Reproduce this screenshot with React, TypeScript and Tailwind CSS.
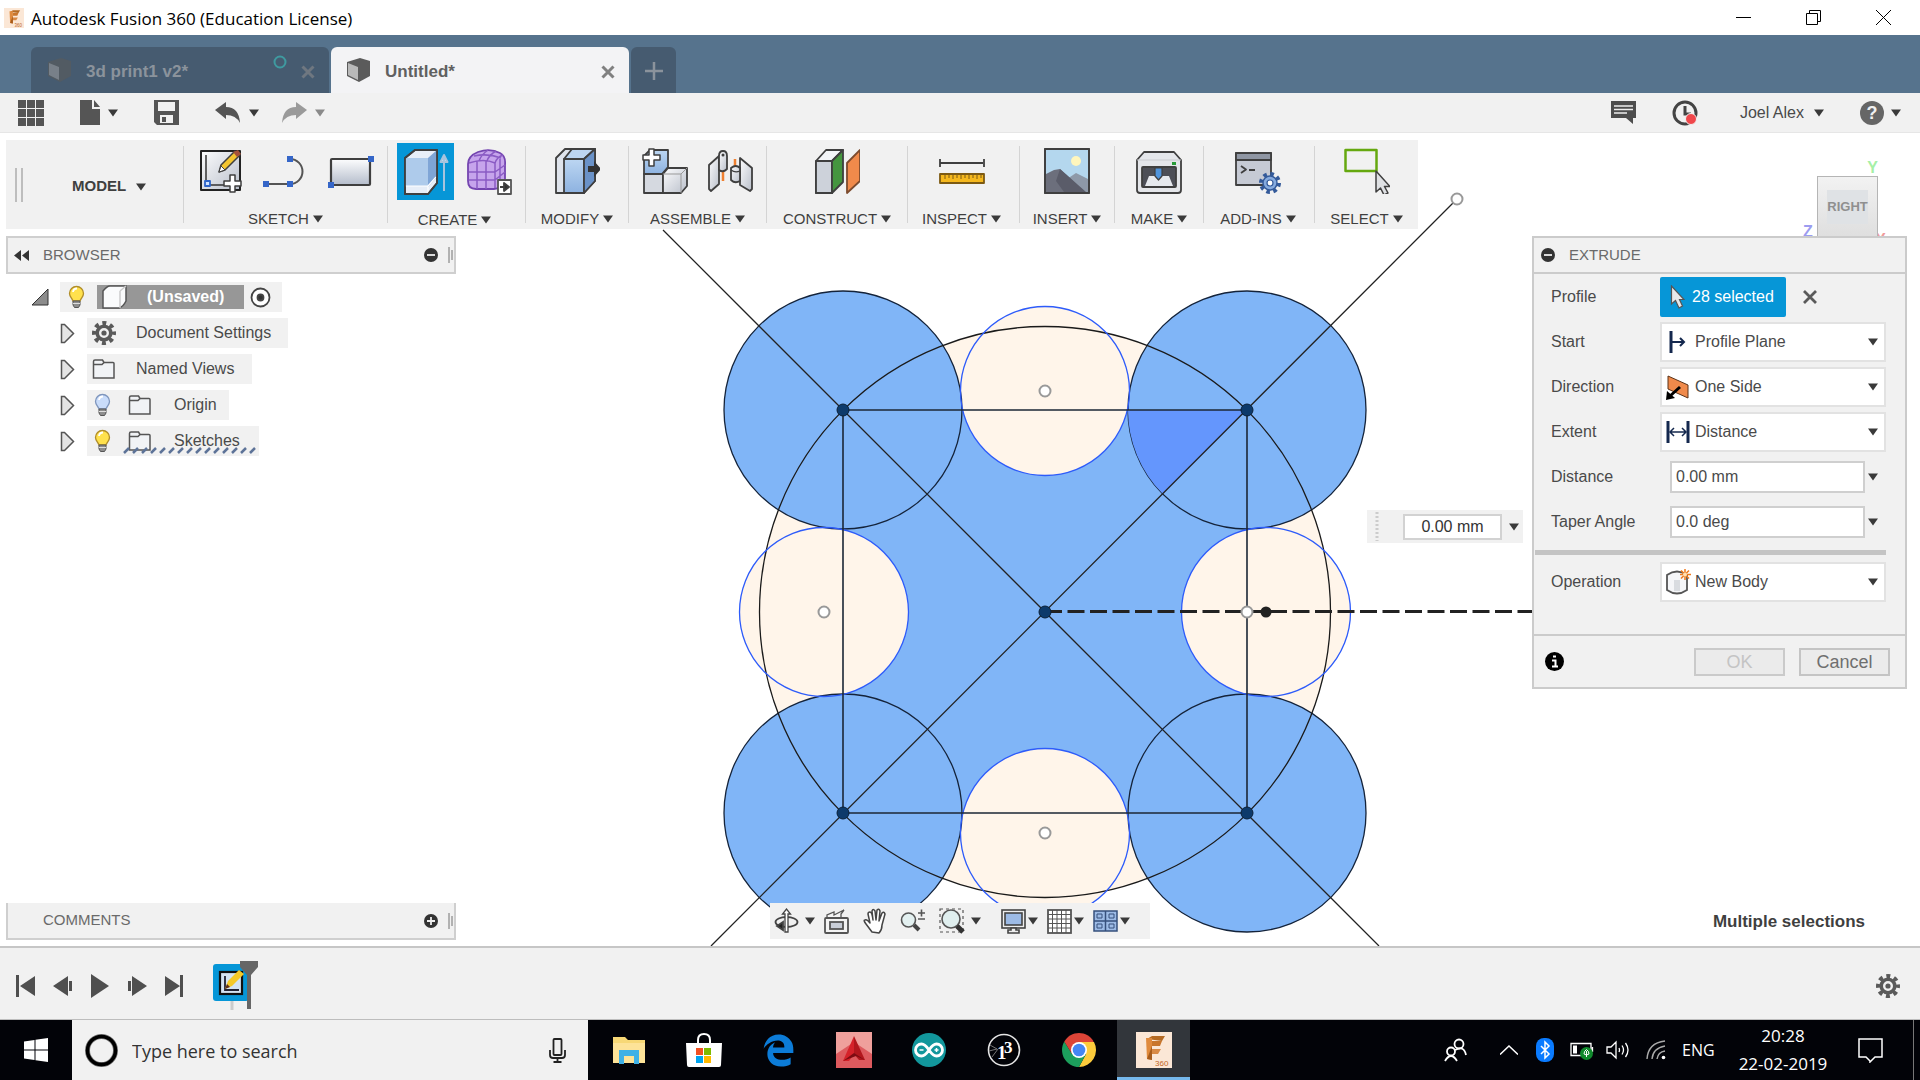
import type { ReactNode } from "react"
import { FaEdgeLegacy } from "react-icons/fa6"

type IconProps = { className?: string }

const INK = "#3f3f3f"

function Caret({ className = "text-[#3a3a3a]" }: IconProps) {
  return (
    <svg width="10" height="8" viewBox="0 0 10 8" className={`shrink-0 ${className}`}>
      <path d="M0 0.5h10L5 7.5z" fill="currentColor" />
    </svg>
  )
}

/* ---------- shared small icons ---------- */

function Gear() {
  return (
    <svg width="24" height="24" viewBox="0 0 24 24" fill="none" stroke="#5a5a5a">
      <circle cx="12" cy="12" r="10" strokeWidth="4" strokeDasharray="4 3.854" strokeDashoffset="2" />
      <circle cx="12" cy="12" r="6.8" strokeWidth="3.6" />
      <circle cx="12" cy="12" r="2.6" fill="#5a5a5a" stroke="none" />
    </svg>
  )
}

function Bulb({ on = true }: { on?: boolean }) {
  return (
    <svg width="17" height="24" viewBox="0 0 17 24">
      <path
        d="M8.500 1.500a7 7 0 0 0-7 7c0 3 2.500 4.500 3.500 7.500h7c1-3 3.500-4.500 3.500-7.500a7 7 0 0 0-7-7z"
        fill={on ? "#ffe14d" : "#c9dcfa"}
        stroke={on ? "#b08d2a" : "#7f96bd"}
        strokeWidth="1.300"
      />
      <path d="M5 7a4 4 0 0 1 4-3.500" stroke="#fff" strokeWidth="1.800" fill="none" />
      <path d="M5 16h7v4l-1.500 2.500h-4L5 20z" fill="#8e8e8e" stroke="#555" />
      <path d="M5 18.500h7" stroke="#ddd" />
    </svg>
  )
}

function Folder() {
  return (
    <svg width="24" height="22" viewBox="0 0 24 22" fill="#f1f3f6" stroke="#555" strokeWidth="1.500">
      <path d="M1.500 20V3.500q0-1.500 1.500-1.500h7.500l1.500 2.500h9q1 0 1 1V20z" />
      <path d="M1.500 6.500h8.500l2-2" fill="none" />
    </svg>
  )
}

function RoundSign({ plus = false }: { plus?: boolean }) {
  return (
    <svg width="14" height="14" viewBox="0 0 14 14">
      <circle cx="7" cy="7" r="7" fill="#333" />
      <path d={plus ? "M3 7h8M7 3v8" : "M3 7h8"} stroke="#eee" strokeWidth="1.800" />
    </svg>
  )
}

function DragBars() {
  return (
    <svg width="5" height="18" viewBox="0 0 5 18" stroke="#888" strokeWidth="1.200">
      <path d="M1 1v16M4 4v10" />
    </svg>
  )
}

function Cross({ className = "text-[#808080]" }: IconProps) {
  return (
    <svg width="14" height="14" viewBox="0 0 14 14" className={className}>
      <path d="M1.500 1.500l11 11M12.500 1.500l-11 11" stroke="currentColor" strokeWidth="3" />
    </svg>
  )
}

function TabCube({ dim = false }: { dim?: boolean }) {
  return (
    <svg width="25" height="24" viewBox="0 0 25 24" opacity={dim ? 0.6 : 1} className="-mt-1">
      <path d="M1 4L14 0l10 3v15l-11 6-12-6z" fill="#5b5b5b" />
      <path d="M2 5l10 4v13L2 17z" fill={dim ? "#9a9a9a" : "#b9b9b9"} />
    </svg>
  )
}

function FusionMark({ size }: { size: number }) {
  return (
    <svg width={size} height={size} viewBox="0 0 36 36">
      <rect width="36" height="36" fill="#fbe7d6" />
      <path d="M11 7l5-3h13l-3 5z" fill="#b56a22" />
      <path d="M10 6h6v22l-5-1z" fill="#e08a3c" />
      <path d="M16 9h10l-2 5h-8z" fill="#c9762c" />
      <path d="M16 17h9l-3 5h-6z" fill="#d98a45" />
      <path d="M16 14v14l-5-1z" fill="#a75c1c" />
      <text x="19" y="34" fontSize="8" fill="#c0661f" fontFamily="Liberation Sans">360</text>
    </svg>
  )
}

/* ---------- ribbon icons ---------- */

function Big({ children }: { children: ReactNode }) {
  return (
    <svg width="46" height="46" viewBox="0 0 46 46" fill="none" stroke={INK} strokeWidth="1.800" strokeLinejoin="round">
      <defs>
        <linearGradient id="steel" x1="0" y1="0" x2="1" y2="1">
          <stop offset="0" stopColor="#fdfdfe" />
          <stop offset="1" stopColor="#b9bfca" />
        </linearGradient>
        <linearGradient id="sheet" x1="0" y1="0" x2="0" y2="1">
          <stop offset="0" stopColor="#fdfdfe" />
          <stop offset="1" stopColor="#b4bccb" />
        </linearGradient>
        <linearGradient id="sky" x1="0" y1="0" x2="0" y2="1">
          <stop offset="0" stopColor="#bcd6f2" />
          <stop offset="1" stopColor="#8db2e0" />
        </linearGradient>
      </defs>
      {children}
    </svg>
  )
}

const SketchIcon = () => (
  <Big>
    <rect x="3" y="3" width="39" height="39" fill="url(#steel)" stroke="#222" strokeWidth="2" />
    <path d="M8 7v30h24" stroke="#333" strokeWidth="1.500" />
    <rect x="7" y="33" width="5" height="5" fill="#cfe2ff" stroke="#2d64c8" />
    <path d="M21 24l2-7L37 3l5 4-15 15z" fill="#f3c530" strokeWidth="1.500" />
    <path d="M35 4l5-2 3 4-4 3z" fill="#a4523a" stroke="none" />
    <path d="M21 24l2-6 4 4z" fill="#fff" strokeWidth="1" />
    <path d="M32 27h5v6h6v5h-6v6h-5v-6h-6v-5h6z" fill="#fff" strokeWidth="1.500" />
  </Big>
)

const LineIcon = () => (
  <Big>
    <path d="M3 36h24a12.500 12.500 0 0 0 0-25" stroke="#555" strokeWidth="2" />
    <path d="M0 33h6v6H0zM24 33h6v6h-6zM24 8h6v6h-6z" fill="#3566c8" stroke="none" />
  </Big>
)

const RectIcon = () => (
  <Big>
    <rect x="3" y="11" width="39" height="26" rx="1" fill="url(#sheet)" strokeWidth="2.200" />
    <path d="M0 34h6v6H0zM40 8h6v6h-6z" fill="#3566c8" stroke="none" />
  </Big>
)

const ExtrudeIcon = () => (
  <Big>
    <path d="M2 9L12 1h22v33l-9 11H2z" fill="#e7eef8" />
    <path d="M2 9h23v28H2z" fill="#aecbeb" stroke="none" />
    <path d="M25 9l9-8v27l-9 10z" fill="#7fa5d6" stroke="none" />
    <path d="M2 37h23l8-9M25 37v7" stroke="#fff" strokeWidth="1.200" />
    <path d="M2 9L12 1h22v33l-9 11H2z" />
    <path d="M41 42V8M37.500 13L41 6l3.500 7z" stroke="#a7c3dd" fill="#d5e4f2" strokeWidth="2" />
  </Big>
)

const FormIcon = () => (
  <Big>
    <path d="M2 15Q2 7 12 3 24-1 34 4q6 3 5 12v14q-4 10-11 10H10q-8 0-8-8z" fill="#c6a4ec" stroke="#7445b0" />
    <path
      d="M3 14q15-5 26 0v25M3 23h26l10-7M3 31h26l10-8M11 12v28M20 12v28M8 7q14-3 27 2M13 12q2-6 9-11M21 12q2-6 9-10M29 14q2-6 8-8M34 10v25"
      stroke="#8a5bc4"
      strokeWidth="1.500"
    />
    <rect x="32" y="31" width="13" height="14" fill="#fff" stroke="#555" />
    <path d="M34 38h5M38 34l5 4-5 4z" fill="#333" />
  </Big>
)

const ModifyIcon = () => (
  <Big>
    <path d="M2 10L11 1h30v32L30 45H2z" fill="#dfe4ec" />
    <path d="M10 11l8-10h23l-11 10z" fill="#bcd5f1" />
    <path d="M10 11h20v34H10z" fill="url(#sky)" />
    <path d="M30 11L41 1v32L30 45z" fill="#6a92c8" />
    <path d="M34 18h6v-5l7 8-7 8v-5h-6z" fill="#333" stroke="none" />
  </Big>
)

const AssembleIcon = () => (
  <Big>
    <path d="M2 8l6-6h18v17l-6 7H2z" fill="url(#sky)" />
    <path d="M2 26h19v19H2z" fill="#d5d9e0" />
    <path d="M21 26l5-6h19v18l-6 7H21z" fill="url(#steel)" />
    <path d="M21 26h18v19M39 26l6-6" strokeWidth="1" stroke="#999" />
    <path d="M7 1h5v6h6v5h-6v6H7v-6H1V7h6z" fill="#fff" strokeWidth="1.500" />
  </Big>
)

const JointIcon = () => (
  <Big>
    <path d="M16 20v13M28 11v12" stroke="#f08030" strokeWidth="2.500" />
    <path d="M2 17L12 8v28L4 43l-2-2z" fill="url(#steel)" />
    <path d="M12 8q0-5 4-5t4 5v13q-4 4-8 1z" fill="url(#steel)" />
    <path d="M45 20L33 10v27l10 6 2-2z" fill="url(#steel)" />
    <path d="M33 20q-4-4-9 0v12q4 4 9 1z" fill="url(#steel)" />
    <path d="M24 22q4 3 9 1" strokeWidth="1.200" />
    <circle cx="16" cy="7" r="1.500" fill={INK} stroke="none" />
  </Big>
)

const ConstructIcon = () => (
  <Big>
    <path d="M2 13L12 2h17L18 13v32H2z" fill="#f3f5f8" />
    <path d="M2 13h16v32H2z" fill="#cdd2da" />
    <path d="M18 13L29 2v32L18 45z" fill="#45963f" />
    <path d="M33 15L46 2v31L33 45z" fill="#f08a4b" stroke="#7c4b2e" />
  </Big>
)

const InspectIcon = () => (
  <Big>
    <path d="M1 15h43M1 11v8M45 11v8" />
    <rect x="1" y="26" width="44" height="9" fill="#f5b81e" stroke="#7d5a12" />
    <path d="M6 27v4M10 27v3M14 27v4M18 27v3M22 27v4M26 27v3M30 27v4M34 27v3M38 27v4M42 27v3" stroke="#7d5a12" strokeWidth="1" />
  </Big>
)

const InsertIcon = () => (
  <Big>
    <rect x="1" y="1" width="44" height="44" fill="#b4d7ee" />
    <circle cx="32" cy="13" r="5" fill="#fff6bd" stroke="none" />
    <path d="M20 33l12-8 12 6v13H20z" fill="#8e99a8" stroke="none" />
    <path d="M2 26l8-4 6-1 10 9 15 14H2z" fill="#6c6f7c" stroke="none" />
    <path d="M16 21l-4 12 8 11h22z" fill="#5a5c69" stroke="none" />
    <rect x="1" y="1" width="44" height="44" />
  </Big>
)

const MakeIcon = () => (
  <Big>
    <path d="M1 12l7-8h30l7 8v30q0 3-3 3H4q-3 0-3-3z" fill="#e4e6ea" />
    <path d="M1 12h44" stroke="#c8cace" strokeWidth="1" />
    <rect x="6" y="19" width="34" height="20" rx="1" fill="#4d4f57" />
    <path d="M13 28h20l4 10H9z" fill="#e6e9ee" stroke="none" />
    <path d="M19 20h7v8l-3.500 4L19 28z" fill="#4f94dc" strokeWidth="1.200" />
    <rect x="36" y="14" width="4" height="3" fill="#289b38" stroke="none" />
  </Big>
)

const AddInsIcon = () => (
  <Big>
    <rect x="1" y="5" width="35" height="32" fill="#c6cad4" />
    <rect x="1" y="5" width="35" height="7" fill="#8f96a3" />
    <path d="M6 18l5 3.500L6 25M14 22h6" />
    <circle cx="35" cy="35" r="9" stroke="#345a9a" strokeWidth="4" strokeDasharray="3.600 3.469" />
    <circle cx="35" cy="35" r="7" fill="#86abdf" stroke="#345a9a" strokeWidth="1.500" />
    <circle cx="35" cy="35" r="3" fill="#fff" stroke="#345a9a" strokeWidth="1.200" />
  </Big>
)

const SelectIcon = () => (
  <Big>
    <rect x="1.500" y="2" width="31" height="21" stroke="#65a80f" strokeWidth="2.500" />
    <path d="M32 23v21l4.500-4 3.500 7 4-2-3.500-6.500H46z" fill="#dfe1e4" strokeWidth="1.500" />
  </Big>
)

type Group = { name: string; width: string; icons: (() => ReactNode)[]; gap?: string }

const groups: Group[] = [
  { name: "SKETCH", width: "w-[204px]", icons: [SketchIcon, LineIcon, RectIcon], gap: "gap-[19px]" },
  { name: "CREATE", width: "w-[138px] pr-1", icons: [ExtrudeIcon, FormIcon], gap: "gap-3" },
  { name: "MODIFY", width: "w-[103px]", icons: [ModifyIcon] },
  { name: "ASSEMBLE", width: "w-[138px]", icons: [AssembleIcon, JointIcon], gap: "gap-[19px]" },
  { name: "CONSTRUCT", width: "w-[141px]", icons: [ConstructIcon] },
  { name: "INSPECT", width: "w-[112px] pr-1", icons: [InspectIcon] },
  { name: "INSERT", width: "w-[95px]", icons: [InsertIcon] },
  { name: "MAKE", width: "w-[89px]", icons: [MakeIcon] },
  { name: "ADD-INS", width: "w-[111px] pr-0.5", icons: [AddInsIcon] },
  { name: "SELECT", width: "w-[104px]", icons: [SelectIcon] },
]

function TitleBar() {
  return (
    <header className="flex h-[35px] items-center bg-white pl-1 pr-7 text-black">
      <FusionMark size={20} />
      <h1 className="ml-[7px] pt-0.5 font-['Open_Sans',sans-serif] text-[17px] leading-6">Autodesk Fusion 360 (Education License)</h1>
      <div className="ml-auto flex items-center gap-[53px]">
        <button aria-label="Minimize">
          <svg width="17" height="17" stroke="#000"><path d="M1 8.500h15" /></svg>
        </button>
        <button aria-label="Restore">
          <svg width="17" height="17" fill="none" stroke="#000"><path d="M1.500 4.500h11v11h-11zM4.500 4.500v-3h11v11h-3" /></svg>
        </button>
        <button aria-label="Close">
          <svg width="17" height="17" stroke="#000"><path d="M1 1l15 15M16 1L1 16" /></svg>
        </button>
      </div>
    </header>
  )
}

function TabStrip() {
  return (
    <nav className="flex h-[58px] items-end gap-0.5 bg-[#56738d] pl-[31px] text-[17px] font-bold">
      <div className="flex h-[46px] w-[298px] items-center rounded-t-md bg-[#465b70] pl-4 pr-3.5 pt-1 text-[#8b939c]">
        <TabCube dim />
        <button className="ml-3.5">3d print1 v2*</button>
        <svg width="14" height="34" className="ml-auto">
          <circle cx="7" cy="7" r="5.500" fill="none" stroke="#3f9aa0" strokeWidth="2" />
        </svg>
        <button aria-label="Close 3d print1 v2*" className="ml-3.5">
          <Cross className="text-[#6f7780]" />
        </button>
      </div>
      <div className="flex h-[46px] w-[298px] items-center rounded-t-md bg-[#f3f3f5] pl-[15px] pr-3.5 pt-1 text-[#606060]">
        <TabCube />
        <button className="ml-3.5">Untitled*</button>
        <button aria-label="Close Untitled*" className="ml-auto">
          <Cross />
        </button>
      </div>
      <button aria-label="New tab" className="flex h-[46px] w-[45px] items-center justify-center rounded-t-md bg-[#465b70] pt-0.5">
        <svg width="18" height="18" stroke="#8b939c" strokeWidth="2.500"><path d="M9 0v18M0 9h18" /></svg>
      </button>
    </nav>
  )
}

function QuickBar() {
  return (
    <div className="flex h-10 items-center border-b border-[#e6e6e6] bg-[#f1f1f1] pl-[18px] pr-[19px] text-[#4a4a4a]">
      <button aria-label="Data panel">
        <svg width="26" height="26" fill="#555">
          <path d="M0 0h8v8H0zM9 0h8v8H9zM18 0h8v8h-8zM0 9h8v8H0zM9 9h8v8H9zM18 9h8v8h-8zM0 18h8v8H0zM9 18h8v8H9zM18 18h8v8h-8z" />
        </svg>
      </button>
      <button aria-label="File" className="ml-9 flex items-center gap-2">
        <svg width="20" height="25" fill="#555"><path d="M0 0h12v9h8v16H0zM14 0l6 7h-6z" /></svg>
        <Caret />
      </button>
      <button aria-label="Save" className="ml-9">
        <svg width="25" height="25" fillRule="evenodd" fill="#555">
          <path d="M0 0h25v25H3l-3-3zM4 2v9h17V2zM6 15v8h13v-8z" />
          <path d="M8 17h4v5H8z" />
        </svg>
      </button>
      <button aria-label="Undo" className="ml-9 flex items-center gap-2">
        <svg width="26" height="22" fill="#555"><path d="M0 8l11-8v5q13 0 14 16-4-8-14-8v4z" /></svg>
        <Caret />
      </button>
      <button aria-label="Redo" className="ml-[22px] flex items-center gap-2">
        <svg width="26" height="22" fill="#9a9a9a"><path d="M26 8L15 0v5Q2 5 1 21q4-8 14-8v4z" /></svg>
        <Caret className="text-[#8a8a8a]" />
      </button>
      <div className="ml-auto flex items-center">
        <button aria-label="Comments">
          <svg width="25" height="23" fill="#4d4d4d">
            <path d="M0 0h25v17h-3v6l-7-6H0z" />
            <path d="M3 5h19M3 8.500h19M3 12h13" stroke="#eee" strokeWidth="1.500" />
          </svg>
        </button>
        <button aria-label="Job status" className="ml-9">
          <svg width="26" height="26" fill="none" stroke="#444" strokeWidth="3">
            <circle cx="13" cy="13" r="11" />
            <path d="M13 6v8h6" />
            <circle cx="19" cy="19" r="5.500" fill="#f0474b" stroke="#f1f1f1" strokeWidth="1" />
          </svg>
        </button>
        <button className="ml-[42px] flex items-center gap-2.5 text-base">
          Joel Alex <Caret />
        </button>
        <button aria-label="Help" className="ml-9 flex items-center gap-[7px]">
          <svg width="24" height="24">
            <circle cx="12" cy="12" r="12" fill="#666" />
            <text x="12" y="18" textAnchor="middle" fontSize="18" fontWeight="700" fill="#f1f1f1">?</text>
          </svg>
          <Caret />
        </button>
      </div>
    </div>
  )
}

function Divider() {
  return <div className="h-[77px] w-px shrink-0 bg-[#d4d4d4]" />
}

function Ribbon() {
  return (
    <div className="relative ml-1.5 mt-[7px] flex h-[89px] w-fit items-center bg-[#f1f1f1] text-[15px] text-[#3f3f3f]">
      <div className="flex w-[177px] items-center pl-[9px]">
        <svg width="8" height="34" stroke="#bdbdbd" strokeWidth="2"><path d="M1 0v34M7 0v34" /></svg>
        <button className="ml-[49px] mt-1 flex items-center gap-2.5 font-bold">
          MODEL <Caret />
        </button>
      </div>
      {groups.map((g) => (
        <div key={g.name} className={`flex h-full items-center ${g.width}`}>
          <Divider />
          <div className="flex h-full flex-1 flex-col items-center pt-[3px]">
            <div className={`flex h-[57px] items-center ${g.gap ?? ""}`}>
              {g.icons.map((Icon, i) => (
                <button
                  key={i}
                  aria-label={`${g.name} ${i + 1}`}
                  className={
                    Icon === ExtrudeIcon ? "flex h-[57px] w-[57px] items-center justify-center bg-[#0696d7]" : "flex"
                  }
                >
                  <Icon />
                </button>
              ))}
            </div>
            <button className="mt-2.5 flex items-center gap-1 leading-5">
              {g.name} <Caret />
            </button>
          </div>
        </div>
      ))}
    </div>
  )
}

/* ---------- sketch geometry ---------- */

const corners = [
  [843, 410],
  [1247, 410],
  [843, 813],
  [1247, 813],
]
const inner = [
  [1045, 391],
  [824, 612],
  [1266, 612],
  [1045, 833],
]

function SketchCanvas() {
  return (
    <svg className="absolute inset-0 h-full w-full" fill="none">
      <g transform="translate(0 -133)">
        <circle cx="1045" cy="612" r="285.500" fill="#fff5ea" />
        <rect x="843" y="410" width="404" height="403" fill="#80b5f7" />
        {inner.map(([x, y]) => (
          <circle key={`${x}-${y}`} cx={x} cy={y} r="84.500" fill="#fff5ea" />
        ))}
        {corners.map(([x, y]) => (
          <circle key={`${x}-${y}`} cx={x} cy={y} r="119" fill="#80b5f7" stroke="#14233a" strokeWidth="1.300" />
        ))}
        <path d="M1247 410H1128a119 119 0 0 0 34.900 84.100z" fill="#6496fd" />
        <circle cx="1045" cy="612" r="285.500" stroke="#1a1a1a" strokeWidth="1.300" />
        {inner.map(([x, y]) => (
          <circle key={`${x}-${y}`} cx={x} cy={y} r="84.500" stroke="#2d5bfa" strokeWidth="1.300" />
        ))}
        <path d="M843 410h404v403H843z" stroke="#1c2736" strokeWidth="1.600" />
        <path d="M663 230l716 716M1453 203L711 946" stroke="#222" strokeWidth="1.300" />
        <path d="M1045 611.500h492" stroke="#222" strokeWidth="3" strokeDasharray="17 5.500" />
        {[...corners, [1045, 612]].map(([x, y]) => (
          <circle key={`${x}-${y}`} cx={x} cy={y} r="6" fill="#0d3a6b" stroke="#0a2038" />
        ))}
        <circle cx="1266" cy="612" r="5.500" fill="#222" />
        {[inner[0], inner[1], inner[3], [1247, 612], [1457, 199]].map(([x, y]) => (
          <circle key={`${x}-${y}`} cx={x} cy={y} r="5.500" fill="#fff" stroke="#999" strokeWidth="2" />
        ))}
      </g>
    </svg>
  )
}

function ViewCube() {
  return (
    <div className="absolute right-[42px] top-[43px] text-sm font-bold">
      <span className="absolute -top-5 right-0 text-base leading-6 text-[#a6f0a6]">Y</span>
      <span className="absolute -left-3.5 top-[46px] text-base leading-5 text-[#9c9cf0]">Z</span>
      <span className="absolute -right-2 top-[54px] text-base leading-5 text-[#f09c9c]">X</span>
      <button className="relative flex h-[70px] w-[61px] items-center justify-center border border-[#b5b5b5] bg-linear-to-b from-[#f2f2f2] to-[#dcdcdc] pb-2 text-[13px] text-[#8f8f8f]">
        <span className="bg-[#dfe2e5] py-2">RIGHT</span>
      </button>
    </div>
  )
}

function TreeArrow() {
  return (
    <svg width="15" height="21" fill="#e4e4e4" stroke="#555" strokeWidth="1.500"><path d="M1.500 1.500h3l9 9-9 9h-3z" /></svg>
  )
}

function BrowserPanel() {
  return (
    <section className="w-[450px] text-base text-[#4a4a4a]">
      <div className="flex h-[38px] items-center border-2 border-[#cfcfcf] bg-[#f1f1f1] pl-1.5 pr-px text-[#6a6a6a]">
        <svg width="15" height="11" fill="#333"><path d="M7 0v11L0 5.500zM15 0v11L8 5.500z" /></svg>
        <h2 className="ml-3.5 text-[15px]">BROWSER</h2>
        <button aria-label="Collapse browser" className="ml-auto mr-2.5"><RoundSign /></button>
        <DragBars />
      </div>
      <ul className="mt-2 space-y-1.5">
        <li className="flex items-center pl-[25px]">
          <svg width="18" height="18" fill="#8c8c8c" stroke="#333"><path d="M1 17L17 1v16z" /></svg>
          <div className="ml-[11px] flex h-[30px] w-[222px] items-center bg-[#f1f1f1] pl-2">
            <Bulb />
            <button className="ml-3 flex h-6 w-[147px] items-center bg-[#979797] pl-[5px] font-bold text-white">
              <svg width="25" height="24" fill="#fafbfc" stroke="#555" strokeWidth="1.500">
                <path d="M1 6q4-5 7-5h16v15q-3 6-7 7H1z" />
                <path d="M18 6v17M18 6l6-5" stroke="#ccc" />
              </svg>
              <span className="ml-5">(Unsaved)</span>
            </button>
            <svg width="21" height="21" className="ml-1.5" fill="#fff" stroke="#444" strokeWidth="1.800">
              <circle cx="10.500" cy="10.500" r="9" />
              <circle cx="10.500" cy="10.500" r="3" fill="#333" />
            </svg>
          </div>
        </li>
        <li className="flex items-center gap-3 pl-[54px]">
          <TreeArrow />
          <div className="flex h-[30px] w-[201px] items-center gap-5 bg-[#f1f1f1] pl-[5px]">
            <Gear />
            Document Settings
          </div>
        </li>
        <li className="flex items-center gap-3 pl-[54px]">
          <TreeArrow />
          <div className="flex h-[30px] w-[165px] items-center gap-5 bg-[#f1f1f1] pl-[5px]">
            <Folder />
            Named Views
          </div>
        </li>
        <li className="flex items-center gap-3 pl-[54px]">
          <TreeArrow />
          <div className="flex h-[30px] w-[142px] items-center bg-[#f1f1f1] pl-[7px]">
            <Bulb on={false} />
            <span className="ml-[17px] flex items-center gap-[22px]"><Folder /> Origin</span>
          </div>
        </li>
        <li className="flex items-center gap-3 pl-[54px]">
          <TreeArrow />
          <div className="relative flex h-[30px] w-[172px] items-center bg-[#f1f1f1] pl-[7px]">
            <Bulb />
            <span className="ml-[17px] flex items-center gap-[22px]"><Folder /> Sketches</span>
            <svg className="absolute bottom-0.5 left-9" width="134" height="7">
              <path
                d="M1 6l5-5M10 6l5-5M19 6l5-5M28 6l5-5M37 6l5-5M46 6l5-5M55 6l5-5M64 6l5-5M73 6l5-5M82 6l5-5M91 6l5-5M100 6l5-5M109 6l5-5M118 6l5-5M127 6l5-5"
                stroke="#5d7398"
                strokeWidth="2.500"
              />
            </svg>
          </div>
        </li>
      </ul>
    </section>
  )
}

/* ---------- extrude dialog ---------- */

const StartIcon = () => (
  <svg width="24" height="24" stroke="#14284e" strokeWidth="2"><path d="M5 1v22" strokeWidth="3" /><path d="M6 12h12M14 8l4 4-4 4" fill="none" /></svg>
)
const DirectionIcon = () => (
  <svg width="24" height="26">
    <path d="M2 2l20 9v13L2 15z" fill="#f08a4b" stroke="#5b3318" />
    <path d="M14 13L4 22" stroke="#000" strokeWidth="3" />
    <path d="M0 26l1-9 8 7z" />
  </svg>
)
const ExtentIcon = () => (
  <svg width="24" height="24" stroke="#14284e" strokeWidth="2" fill="none">
    <path d="M2 1v22M22 1v22" strokeWidth="3" />
    <path d="M5 12h14M8 8l-4 4 4 4M16 8l4 4-4 4" strokeWidth="1.500" />
  </svg>
)
const BodyIcon = () => (
  <svg width="25" height="26" fill="none" stroke="#555" strokeWidth="1.800">
    <path d="M1 6q10-7 20 0v15q-10 7-20 0z" fill="#f5f6f8" />
    <path d="M8 11h6v11H8z" fill="#d9dce0" stroke="none" />
    <path d="M19 0v11M14 5.500h11M15 1.500l8 8M23 1.500l-8 8" stroke="#f07a1a" strokeWidth="1.500" />
    <circle cx="19" cy="5.500" r="2" fill="#ffe0b0" stroke="none" />
  </svg>
)

function PickerRow({ id, label, value, icon }: { id: string; label: string; value: string; icon: ReactNode }) {
  return (
    <div className="flex h-10 items-center">
      <label htmlFor={id} className="w-[109px]">{label}</label>
      <div className="relative h-10 w-[226px]">
        <select id={id} className="h-full w-full appearance-none border-2 border-[#e2e2e2] bg-white pl-[33px]">
          <option>{value}</option>
        </select>
        <span className="pointer-events-none absolute inset-y-0 left-1.5 flex items-center">{icon}</span>
        <span className="pointer-events-none absolute inset-y-0 right-2 flex items-center"><Caret /></span>
      </div>
    </div>
  )
}

function ValueRow({ id, label, value }: { id: string; label: string; value: string }) {
  return (
    <div className="flex h-10 items-center">
      <label htmlFor={id} className="w-[119px]">{label}</label>
      <input id={id} defaultValue={value} className="h-8 w-[195px] border-2 border-[#cfcfcf] bg-white px-1" />
      <span className="ml-[3px]"><Caret /></span>
    </div>
  )
}

function ExtrudeDialog() {
  return (
    <form className="w-[375px] border-2 border-[#cbcbcb] bg-[#f1f1f1] text-base text-[#4a4a4a]">
      <div className="flex h-9 items-center gap-3.5 border-b-2 border-[#cbcbcb] pl-[7px] text-[15px] text-[#6a6a6a]">
        <RoundSign />
        <h2>EXTRUDE</h2>
      </div>
      <div className="space-y-[5px] pl-[17px] pt-[3px]">
        <div className="flex h-10 items-center">
          <span className="w-[109px]">Profile</span>
          <button type="button" className="flex h-10 w-[126px] items-center rounded-xs bg-[#0696d7] pl-2.5 text-white">
            <svg width="15" height="24" className="mr-[7px]" fill="#e6e8ea" stroke="#555" strokeWidth="1.200">
              <path d="M1.500 1v18l4-3.500 3.500 7.500 3.500-2-3-6.500h4.500z" />
            </svg>
            28 selected
          </button>
          <button type="button" aria-label="Clear selection" className="ml-[17px]">
            <svg width="14" height="14"><path d="M1 1l12 12M13 1L1 13" stroke="#5a5a5a" strokeWidth="2.800" /></svg>
          </button>
        </div>
        <PickerRow id="start" label="Start" value="Profile Plane" icon={<StartIcon />} />
        <PickerRow id="direction" label="Direction" value="One Side" icon={<DirectionIcon />} />
        <PickerRow id="extent" label="Extent" value="Distance" icon={<ExtentIcon />} />
        <ValueRow id="distance" label="Distance" value="0.00 mm" />
        <ValueRow id="taper" label="Taper Angle" value="0.0 deg" />
      </div>
      <div className="ml-px mt-2 h-[5px] w-[351px] bg-[#c4c4c4]" />
      <div className="pb-8 pl-[17px] pt-[7px]">
        <PickerRow id="operation" label="Operation" value="New Body" icon={<BodyIcon />} />
      </div>
      <div className="flex h-[53px] items-center border-t-2 border-[#cbcbcb] pl-[11px] pr-[15px] text-lg">
        <svg width="19" height="19">
          <circle cx="9.500" cy="9.500" r="9.500" />
          <path d="M7 8.500h3.500v6M7 14.500h6M8 4.500h3" stroke="#fff" strokeWidth="2" fill="none" />
        </svg>
        <button type="button" disabled className="ml-auto h-7 w-[91px] border-2 border-[#cacaca] bg-[#ebebeb] leading-6 text-[#c4c4c4]">OK</button>
        <button type="button" className="ml-3.5 h-7 w-[91px] border-2 border-[#c4c4c4] bg-[#ebebeb] leading-6 text-[#6f6f6f]">Cancel</button>
      </div>
    </form>
  )
}

function NavBar() {
  return (
    <div className="absolute bottom-[7px] left-1/2 flex h-9 w-[380px] -translate-x-1/2 items-center bg-[#f1f1f1] pl-1">
      <button aria-label="Orbit" className="flex items-center gap-1.5">
        <svg width="25" height="26" fill="none" stroke="#444" strokeWidth="1.800">
          <ellipse cx="12.500" cy="14" rx="11" ry="5" />
          <path d="M11 24V6H8.500l4-5 4 5H14v18z" fill="#fff" strokeWidth="1.300" />
          <path d="M9 14l-6 4 6 4z" fill="#222" />
        </svg>
        <Caret />
      </button>
      <button aria-label="Look at" className="ml-[9px]">
        <svg width="25" height="25" fill="#f4f4f4" stroke="#555" strokeWidth="1.800">
          <path d="M3 9V6l7-3v3l10-5-3 4v4" strokeWidth="1.300" />
          <rect x="1" y="9" width="23" height="15" rx="1" />
          <rect x="6" y="13" width="13" height="7" fill="#c9ced8" />
        </svg>
      </button>
      <button aria-label="Pan" className="ml-3.5">
        <svg width="26" height="26" fill="#fff" stroke="#444" strokeWidth="1.500" strokeLinejoin="round">
          <path d="M9 24L3 16q-3-4-1-4 2-1 5 3L5 6q0-2 2-2t3 8l-1-9q1-3 3 0l1 9 1-10q2-2 3 1l-1 10 3-8q2-2 3 1l-3 11q0 5-3 8z" />
        </svg>
      </button>
      <button aria-label="Zoom" className="ml-[11px]">
        <svg width="26" height="26" fill="none" stroke="#555" strokeWidth="1.600">
          <circle cx="8.500" cy="12" r="7" fill="#e3f0f0" />
          <path d="M14 17l5 5" stroke="#444" strokeWidth="4" />
          <path d="M18 5h7M21.500 1.500v7M18 11h7" />
        </svg>
      </button>
      <button aria-label="Fit" className="ml-[13px] flex items-center gap-1.5">
        <svg width="26" height="26" fill="none" stroke="#555" strokeWidth="1.600">
          <rect x="1" y="1" width="23" height="23" strokeDasharray="3 3" strokeWidth="1.200" />
          <circle cx="12" cy="11" r="9" fill="#e0efef" />
          <path d="M18 18l6 6" stroke="#333" strokeWidth="5" />
        </svg>
        <Caret />
      </button>
      <button aria-label="Display settings" className="ml-5 flex items-center gap-0.5">
        <svg width="25" height="25" fill="#eee" stroke="#444" strokeWidth="1.600">
          <rect x="1" y="1" width="23" height="18" />
          <rect x="4" y="4" width="17" height="12" fill="#9dbbe6" />
          <path d="M7 24v-3h3v-2h5v2h3v3z" />
        </svg>
        <Caret />
      </button>
      <button aria-label="Grid settings" className="ml-[9px] flex items-center gap-0.5">
        <svg width="25" height="25" fill="#fff" stroke="#555">
          <rect x="1" y="1" width="23" height="23" strokeWidth="1.800" />
          <path d="M5.500 1v23M10 1v23M14.500 1v23M19 1v23M1 5.500h23M1 10h23M1 14.500h23M1 19h23" />
        </svg>
        <Caret />
      </button>
      <button aria-label="Viewports" className="ml-[9px] flex items-center gap-0.5">
        <svg width="25" height="22" fill="#9dbbe6" stroke="#36507c" strokeWidth="1.500">
          <path d="M1 1h23v20H1zM12.500 1v20M1 11h23" />
          <path d="M4 4h5v4H4zM16 4h5v4h-5zM4 14h5v4H4zM16 14h5v4h-5z" strokeWidth="1" />
        </svg>
        <Caret />
      </button>
    </div>
  )
}

function Viewport() {
  return (
    <main className="relative flex min-h-[813px] flex-1 flex-col overflow-hidden bg-white">
      <SketchCanvas />
      <ViewCube />
      <Ribbon />
      <div className="absolute left-[1367px] top-[377px] flex h-[33px] w-[156px] items-center bg-[#f1f1f1] pl-2">
        <svg width="4" height="29"><path d="M2 0v29" stroke="#ccc" strokeWidth="3" strokeDasharray="2 2" /></svg>
        <input
          aria-label="Extrude distance"
          defaultValue="0.00 mm"
          className="ml-6 h-[26px] w-[99px] border-2 border-[#d2d2d2] bg-white text-center text-base text-[#333]"
        />
        <span className="ml-[7px]"><Caret /></span>
      </div>
      <div className="relative mt-[7px] flex items-start justify-between pl-1.5 pr-[13px]">
        <BrowserPanel />
        <ExtrudeDialog />
      </div>
      <div className="relative mb-1.5 mt-auto flex items-center justify-between pl-1.5 pr-[55px]">
        <section className="flex h-[37px] w-[450px] items-center border-x-2 border-b-2 border-[#cfcfcf] bg-[#f1f1f1] pl-[35px] pr-px text-[#6a6a6a]">
          <h2 className="text-[15px]">COMMENTS</h2>
          <button aria-label="Expand comments" className="ml-auto mr-2.5"><RoundSign plus /></button>
          <DragBars />
        </section>
        <p className="text-[17px] font-bold text-[#3f3f3f]">Multiple selections</p>
      </div>
      <NavBar />
    </main>
  )
}

function Timeline() {
  return (
    <div className="flex h-[74px] items-center border-b border-t-2 border-b-[#bdbdbd] border-t-[#c6c6c6] bg-[#f1f1f1] pl-4 pr-5 pt-1">
      <div className="flex items-center gap-[17px]">
        <button aria-label="Go to start"><svg width="20" height="22" fill="#4f4f4f"><path d="M0 0h3v22H0zM19 1v20L4 11z" /></svg></button>
        <button aria-label="Step back"><svg width="20" height="22" fill="#4f4f4f"><path d="M15 1v20L0 11zM16 6h3v10h-3z" /></svg></button>
        <button aria-label="Play"><svg width="20" height="24" fill="#4f4f4f"><path d="M1 0v24l18-12z" /></svg></button>
        <button aria-label="Step forward"><svg width="20" height="22" fill="#4f4f4f"><path d="M5 1v20l15-10zM1 6h3v10H1z" /></svg></button>
        <button aria-label="Go to end"><svg width="20" height="22" fill="#4f4f4f"><path d="M1 1v20l15-10zM16 0h3v22h-3z" /></svg></button>
      </div>
      <button aria-label="Sketch1" className="ml-[29px]">
        <svg width="46" height="50">
          <path d="M19 38v11" stroke="#ccc" strokeWidth="3" />
          <rect y="3" width="36" height="37" rx="3" fill="#0696d7" />
          <rect x="7" y="11" width="22" height="22" fill="#d5e4f3" stroke="#111" strokeWidth="2.200" />
          <path d="M12 15v14h14" fill="none" stroke="#223" strokeWidth="1.800" />
          <path d="M12 28l3-8L26 9l5 4-12 12z" fill="#f5c928" />
          <path d="M12 28l2-5 3 3z" fill="#5b2d1a" />
          <path d="M27 0h18v6l-7 8v34h-4V14l-7-8z" fill="#666" />
        </svg>
      </button>
      <button aria-label="Timeline settings" className="ml-auto"><Gear /></button>
    </div>
  )
}

/* ---------- windows taskbar ---------- */

const apps: { name: string; icon: ReactNode }[] = [
  {
    name: "File Explorer",
    icon: (
      <svg width="32" height="28">
        <path d="M0 1h12l3 3h17v23H0z" fill="#f7d876" />
        <path d="M0 7h32v20H0z" fill="#fde398" />
        <path d="M6 14h20v14h-5v-8H11v8H6z" fill="#3fb1e6" />
      </svg>
    ),
  },
  {
    name: "Microsoft Store",
    icon: (
      <svg width="36" height="35">
        <path d="M12 12V7q0-6 6-6t6 6v5" fill="none" stroke="#fff" strokeWidth="2" />
        <path d="M0 10h36l-1 22q0 2-2 2H3q-2 0-2-2z" fill="#fff" />
        <path d="M10 15h7v7h-7z" fill="#f25022" />
        <path d="M18 15h7v7h-7z" fill="#7fba00" />
        <path d="M10 23h7v7h-7z" fill="#00a4ef" />
        <path d="M18 23h7v7h-7z" fill="#ffb900" />
      </svg>
    ),
  },
  { name: "Edge", icon: <FaEdgeLegacy size={33} color="#0c7cd8" /> },
  {
    name: "AutoCAD",
    icon: (
      <svg width="36" height="36">
        <rect width="36" height="36" fill="#efa09c" />
        <path d="M0 22l18-12 18 12v14H0z" fill="#dd5a5e" />
        <path d="M18 4l11 24h-6l-5-6z" fill="#b1171d" />
        <path d="M18 4L7 29h6l5-7z" fill="#d5222a" />
        <path d="M7 29l11-8 11 7-9-4z" fill="#7d0c12" />
      </svg>
    ),
  },
  {
    name: "Arduino",
    icon: (
      <svg width="34" height="34" fill="none" stroke="#fff" strokeWidth="2.800">
        <circle cx="17" cy="17" r="17" fill="#12979c" stroke="none" />
        <path d="M17 17q-4-6-7.500-6a6 6 0 0 0 0 12q3.500 0 7.500-6 4-6 7.500-6a6 6 0 0 1 0 12q-3.500 0-7.500-6z" />
        <path d="M7.500 17h4M22.500 17h4M24.500 15v4" strokeWidth="1.500" />
      </svg>
    ),
  },
  {
    name: "Processing",
    icon: (
      <svg width="34" height="34" fill="none" stroke="#e5e5e5" strokeWidth="1.600">
        <circle cx="17" cy="17" r="15.500" />
        <path d="M3 12l7 4M2 18l8-2M5 24l6-8" stroke="#777" strokeWidth="1" />
        <text x="10" y="26" fontSize="19" fontWeight="700" fontFamily="Liberation Serif" fill="#fff" stroke="none">1</text>
        <text x="17" y="20" fontSize="17" fontWeight="700" fontFamily="Liberation Serif" fill="#fff" stroke="none">3</text>
      </svg>
    ),
  },
  {
    name: "Chrome",
    icon: (
      <svg width="34" height="34" viewBox="-17 -17 34 34">
        <path d="M0 0L-14.700-8.500A17 17 0 0 1 14.700-8.500z" fill="#dc4437" />
        <path d="M0-8h15a17 17 0 0 1-15 25l7-13z" fill="#fccb3c" />
        <path d="M-14.700-8.500A17 17 0 0 0 0 17L7 4-7 4z" fill="#1c9f5c" />
        <path d="M-14.700-8.500L-7 4 0 0v-8h15z" fill="#dc4437" />
        <circle r="8" fill="#fff" />
        <circle r="6.300" fill="#4486f4" />
      </svg>
    ),
  },
  { name: "Fusion 360", icon: <FusionMark size={36} /> },
]

function Taskbar() {
  return (
    <footer className="flex h-[60px] items-stretch bg-[#020308] font-['Open_Sans',sans-serif] text-white">
      <button aria-label="Start" className="flex w-[72px] items-center justify-center">
        <svg width="24" height="24" fill="#fff"><path d="M0 3.500L10.500 2v9.500H0zM11.500 1.800L24 0v11.500H11.500zM0 12.500h10.500V22L0 20.500zM11.500 12.500H24V24l-12.500-1.800z" /></svg>
      </button>
      <label className="flex w-[516px] items-center bg-[#f1f1f1] pl-[13px] pr-[22px]">
        <svg width="33" height="33" fill="none">
          <circle cx="16.500" cy="16.500" r="14" stroke="#777" strokeWidth="5" />
          <circle cx="16.500" cy="16.500" r="14" stroke="#000" strokeWidth="3.500" />
        </svg>
        <input
          aria-label="Search"
          placeholder="Type here to search"
          className="ml-3.5 flex-1 bg-transparent pt-0.5 text-lg outline-none placeholder:text-[#333]"
        />
        <svg width="17" height="25" fill="none" stroke="#222" strokeWidth="1.800">
          <rect x="4.500" y="1" width="8" height="16" rx="1" />
          <path d="M1 12v5q0 3 3 3h9q3 0 3-3v-5M8.500 20v4M4.500 24h8" />
        </svg>
      </label>
      <div className="ml-1 flex gap-0.5">
        {apps.map((app) => (
          <button
            key={app.name}
            aria-label={app.name}
            className={`flex w-[73px] items-center justify-center ${
              app.name === "Fusion 360" ? "border-b-[3px] border-[#76b9ed] bg-[#32363b] pt-[3px]" : ""
            }`}
          >
            {app.icon}
          </button>
        ))}
      </div>
      <div className="ml-auto flex items-center">
        <svg width="23" height="24" fill="none" stroke="#fff" strokeWidth="1.800">
          <circle cx="15" cy="6" r="4.500" />
          <path d="M11 12q9-5 11 5" />
          <circle cx="7" cy="13.500" r="4" />
          <path d="M1 23q6-10 12 0" />
        </svg>
        <svg width="18" height="10" fill="none" stroke="#fff" strokeWidth="1.500" className="ml-[33px]"><path d="M0 9.500l9-8.500 9 8.500" /></svg>
        <svg width="18" height="24" fill="none" stroke="#fff" strokeWidth="1.500" className="ml-[18px]">
          <rect width="18" height="24" rx="8" fill="#0a7bff" stroke="none" />
          <path d="M5 8l8 8-4 4V4l4 4-8 8" />
        </svg>
        <svg width="24" height="20" fill="none" className="ml-4">
          <path d="M1 3.500h20v12H1zM22.500 7v5" stroke="#fff" strokeWidth="1.300" />
          <path d="M3 5.500h4v8H3z" fill="#fff" />
          <circle cx="16.500" cy="13.500" r="6.500" fill="#108a2c" />
          <path d="M16.500 17v-6M14 14q0-3 2.500-4.500Q19 11 19 14q-2.500 2-5 0z" stroke="#fff" />
        </svg>
        <svg width="24" height="20" fill="none" stroke="#fff" strokeWidth="1.300" className="ml-3">
          <path d="M1 7h4l5-5v16l-5-5H1zM13 8q1 2 0 4M16 5.500q3 4.500 0 9M19.500 3q5 7 0 14" />
        </svg>
        <svg width="20" height="20" fill="none" stroke="#aaa" strokeWidth="1.400" className="ml-4">
          <path d="M1 19Q2 3 19 1M6 19Q7 8 19 6M11 19q1-7 8-8" />
          <circle cx="17.500" cy="17.500" r="1.800" fill="#fff" stroke="none" />
        </svg>
        <span className="ml-4 w-[34px] text-base">ENG</span>
        <div className="ml-5 w-[94px] text-center text-[17px] leading-7">
          <p>20:28</p>
          <p>22-02-2019</p>
        </div>
        <button aria-label="Notifications" className="ml-7">
          <svg width="25" height="25" fill="none" stroke="#fff" strokeWidth="1.500"><path d="M1 1h23v18h-7l-5 5v-1l-4-4H1z" /></svg>
        </button>
        <div className="ml-[30px] mr-1.5 h-[60px] w-px bg-[#777]" />
      </div>
    </footer>
  )
}

export default function App() {
  return (
    <div className="flex min-h-screen flex-col bg-white font-['Liberation_Sans',Arial,sans-serif]">
      <TitleBar />
      <TabStrip />
      <QuickBar />
      <Viewport />
      <Timeline />
      <Taskbar />
    </div>
  )
}
